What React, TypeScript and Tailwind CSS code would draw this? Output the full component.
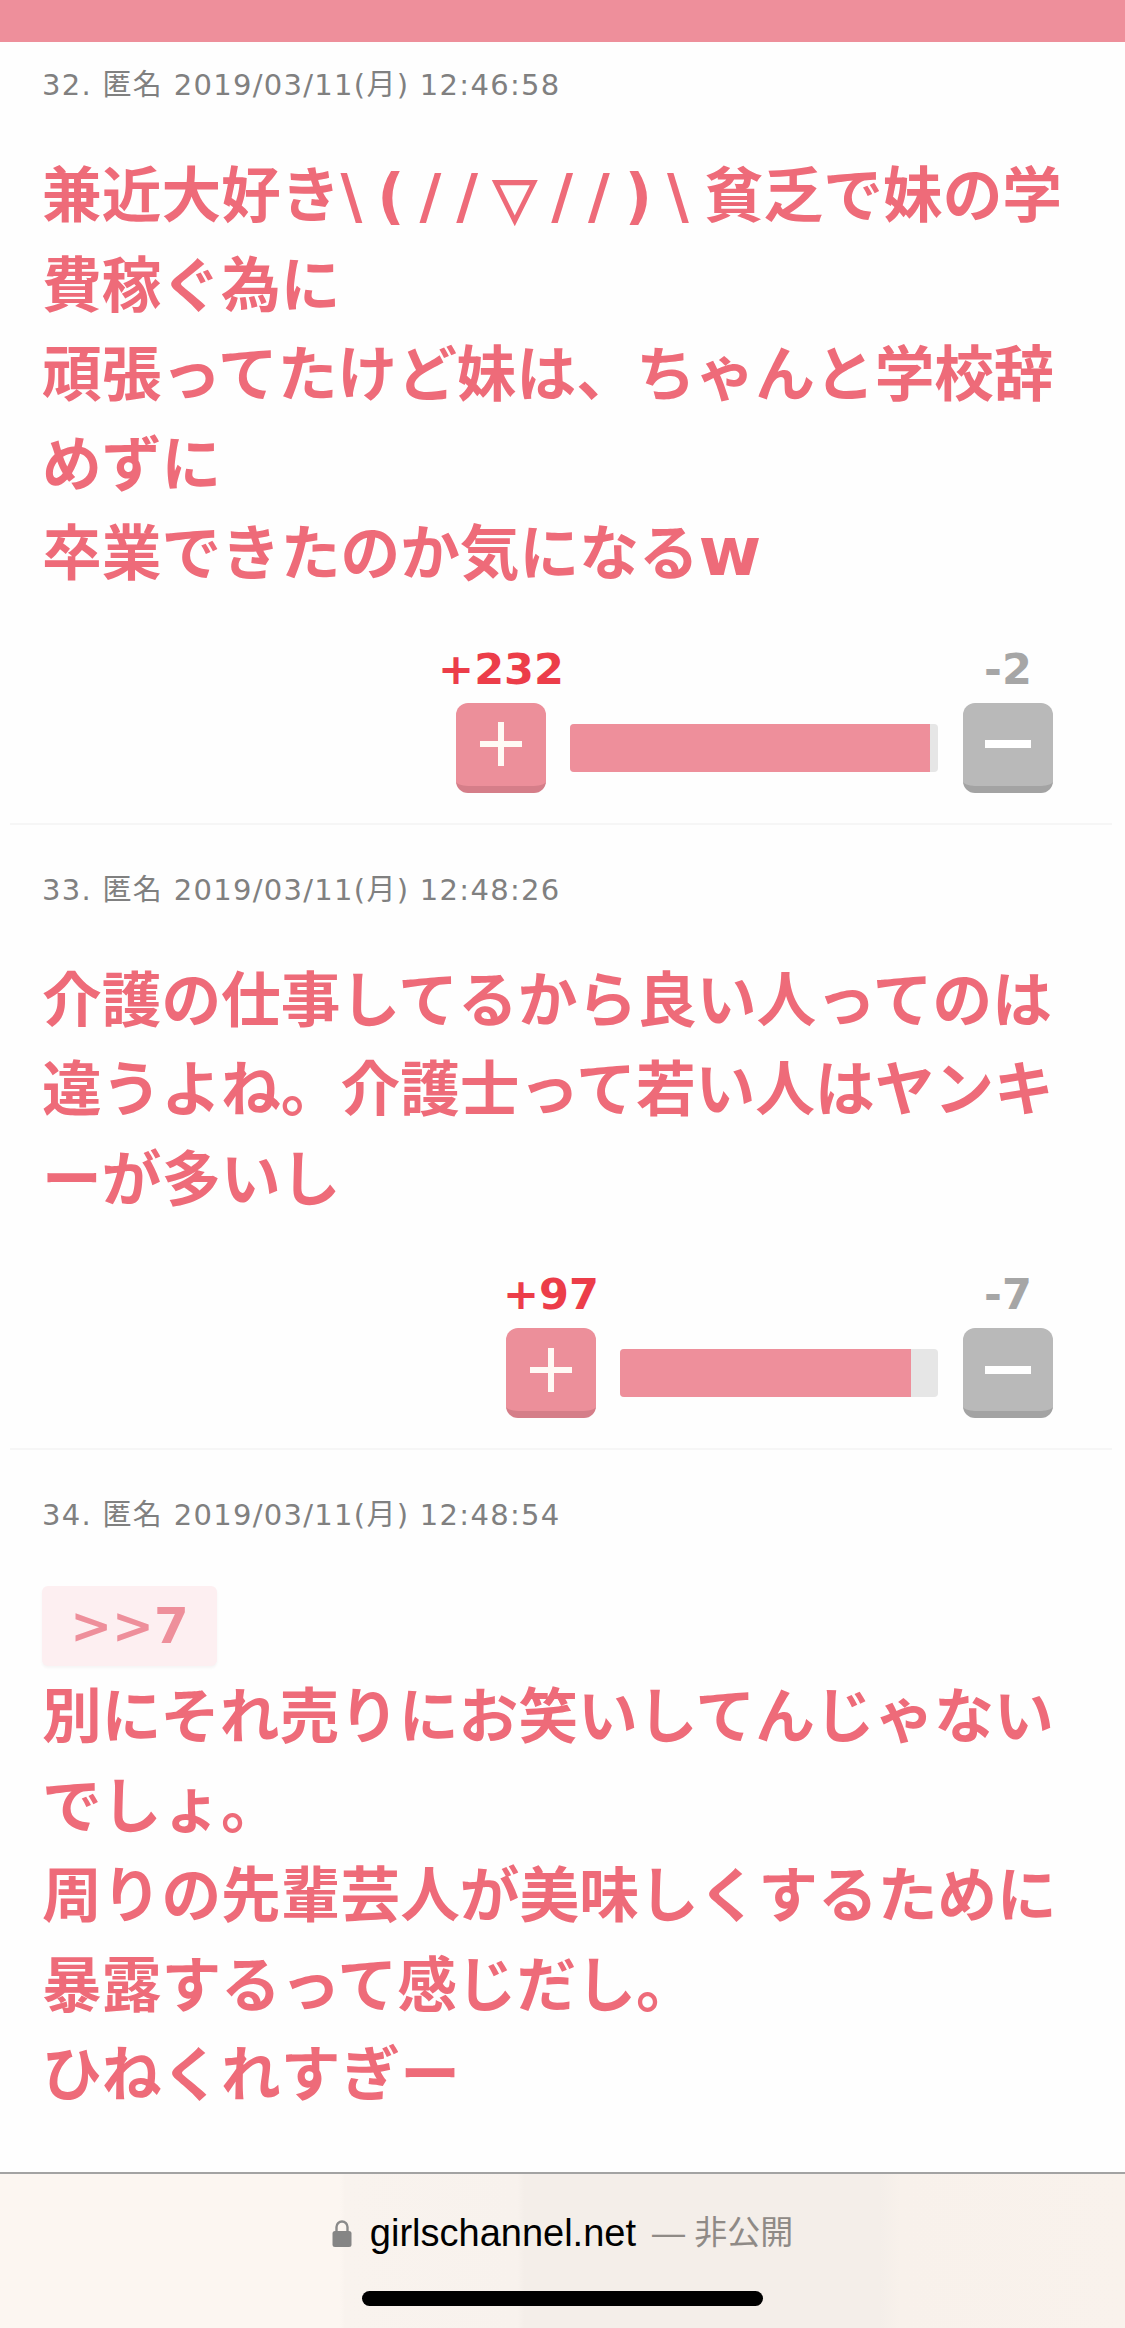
import type { ReactNode } from "react";

const bodyFont = "font-['DejaVu_Sans','Noto_Sans_CJK_JP',sans-serif]";

interface Post {
  no: number;
  date: string;
  quote?: string;
  lines: ReactNode[];
  plus: number;
  minus: number;
  barClass: string;
  fill: number;
}

const posts: Post[] = [
  {
    no: 32,
    date: "2019/03/11(月) 12:46:58",
    lines: [
      <>
        兼近大好き
        <span className="tracking-[15px]">
          \(//<span className="text-[56px] leading-none [-webkit-text-stroke:2px_#ee6b79]">▽</span>//)\
        </span>
        貧乏で妹の学
      </>,
      "費稼ぐ為に",
      "頑張ってたけど妹は、ちゃんと学校辞",
      "めずに",
      <>
        卒業できたのか気になる<span className="text-[68px] leading-none">w</span>
      </>,
    ],
    plus: 232,
    minus: 2,
    barClass: "w-[368px]",
    fill: 360,
  },
  {
    no: 33,
    date: "2019/03/11(月) 12:48:26",
    lines: [
      "介護の仕事してるから良い人ってのは",
      "違うよね。介護士って若い人はヤンキ",
      "ーが多いし",
    ],
    plus: 97,
    minus: 7,
    barClass: "w-[318px]",
    fill: 291,
  },
  {
    no: 34,
    date: "2019/03/11(月) 12:48:54",
    quote: ">>7",
    lines: [
      "別にそれ売りにお笑いしてんじゃない",
      "でしょ。",
      "周りの先輩芸人が美味しくするために",
      "暴露するって感じだし。",
      "ひねくれすぎー",
    ],
    plus: 0,
    minus: 0,
    barClass: "",
    fill: 0,
  },
];

function PlusGlyph() {
  return (
    <svg width="44" height="46" viewBox="0 0 44 46" fill="#fffaf5">
      <rect x="1" y="20" width="42" height="6" />
      <rect x="19" y="1" width="6" height="44" />
    </svg>
  );
}

function MinusGlyph() {
  return (
    <svg width="46" height="8" viewBox="0 0 46 8" fill="#ffffff">
      <rect width="46" height="8" />
    </svg>
  );
}

function VoteBar({ post }: { post: Post }) {
  return (
    <div className="flex justify-end pr-[72px] mt-[47px]">
      <div className="flex flex-col items-center w-[90px]">
        <div className="h-[44px] mb-[12px] leading-[44px] text-[43px] font-bold text-[#ec3d49] whitespace-nowrap">
          +{post.plus}
        </div>
        <div className="w-[90px] h-[90px] rounded-[12px] bg-[#ec8f9a] border-b-[7px] border-[#d57e89] flex items-center justify-center">
          <PlusGlyph />
        </div>
      </div>
      <div
        className={`${post.barClass} h-[48px] mt-[77px] ml-[24px] mr-[25px] rounded-[4px] bg-[#e6e6e6] overflow-hidden`}
      >
        <div className="h-full bg-[#ee8f9b]" style={{ width: post.fill }} />
      </div>
      <div className="flex flex-col items-center w-[90px]">
        <div className="h-[44px] mb-[12px] leading-[44px] text-[43px] font-bold text-[#a6a6a6]">
          -{post.minus}
        </div>
        <div className="w-[90px] h-[90px] rounded-[12px] bg-[#b9b9b9] border-b-[7px] border-[#a3a3a3] flex items-center justify-center">
          <MinusGlyph />
        </div>
      </div>
    </div>
  );
}

function PostRow({ post, first }: { post: Post; first: boolean }) {
  const hasVotes = post.plus > 0;
  return (
    <section className={first ? "pt-[22px]" : "pt-[44px]"}>
      <div className="px-[42px] h-[42px] leading-[42px] text-[29px] tracking-[1.3px] text-[#808080] whitespace-nowrap">
        {post.no}. 匿名 {post.date}
      </div>
      <div className="flow-root mt-[46px] px-[42px] text-[59.7px] leading-[89.5px] font-bold text-[#ee6b79] whitespace-nowrap">
        {post.quote && (
          <div className="w-[175px] h-[80px] mt-[4px] mb-[7px] rounded-[6px] bg-[#fdeff1] text-[#ee8f9b] text-[50px] leading-[80px] text-center shadow-[0_2px_3px_rgba(0,0,0,0.04)]">
            {post.quote}
          </div>
        )}
        {post.lines.map((line, i) => (
          <div key={i}>{line}</div>
        ))}
      </div>
      {hasVotes && (
        <>
          <VoteBar post={post} />
          <div className="mt-[30px] ml-[10px] mr-[13px] h-[2px] bg-[#f6f6f6]" />
        </>
      )}
    </section>
  );
}

function LockIcon() {
  return (
    <svg width="20" height="28" viewBox="0 0 20 28">
      <path d="M4.5 13V8a5.5 5.5 0 0 1 11 0v5" fill="none" stroke="#8a8a8a" strokeWidth="2.4" />
      <rect x="0.5" y="12" width="19" height="16" rx="2.5" fill="#858585" />
    </svg>
  );
}

export default function App() {
  return (
    <div className={`${bodyFont} w-[1125px] h-[2328px] flex flex-col bg-[#fefefe] overflow-hidden`}>
      <div className="h-[42px] shrink-0 bg-[#ee8f9b]" />
      <main className="flex-1 overflow-hidden">
        {posts.map((post, i) => (
          <PostRow key={post.no} post={post} first={i === 0} />
        ))}
      </main>
      <footer className="relative h-[156px] shrink-0 bg-[linear-gradient(90deg,#fcf6f1_0,#fcf6f1_340px,#f9f3ee_345px,#f8f2ed_518px,#f4eee9_524px,#f4eee9_880px,#f8f1eb_900px,#f9f2ec_100%)] border-t-2 border-[#a3a3a3] overflow-hidden">
        <div className="flex items-center justify-center h-[40px] mt-[39px] font-['Liberation_Sans','Noto_Sans_CJK_JP',sans-serif] text-[38px] whitespace-nowrap">
          <LockIcon />
          <span className="ml-[18px] text-black">girlschannel.net</span>
          <span className="ml-[16px] text-[33px] text-[#8f8a86]">— 非公開</span>
        </div>
        <div className="w-[401px] h-[15px] mt-[38px] ml-[362px] rounded-full bg-black" />
      </footer>
    </div>
  );
}
